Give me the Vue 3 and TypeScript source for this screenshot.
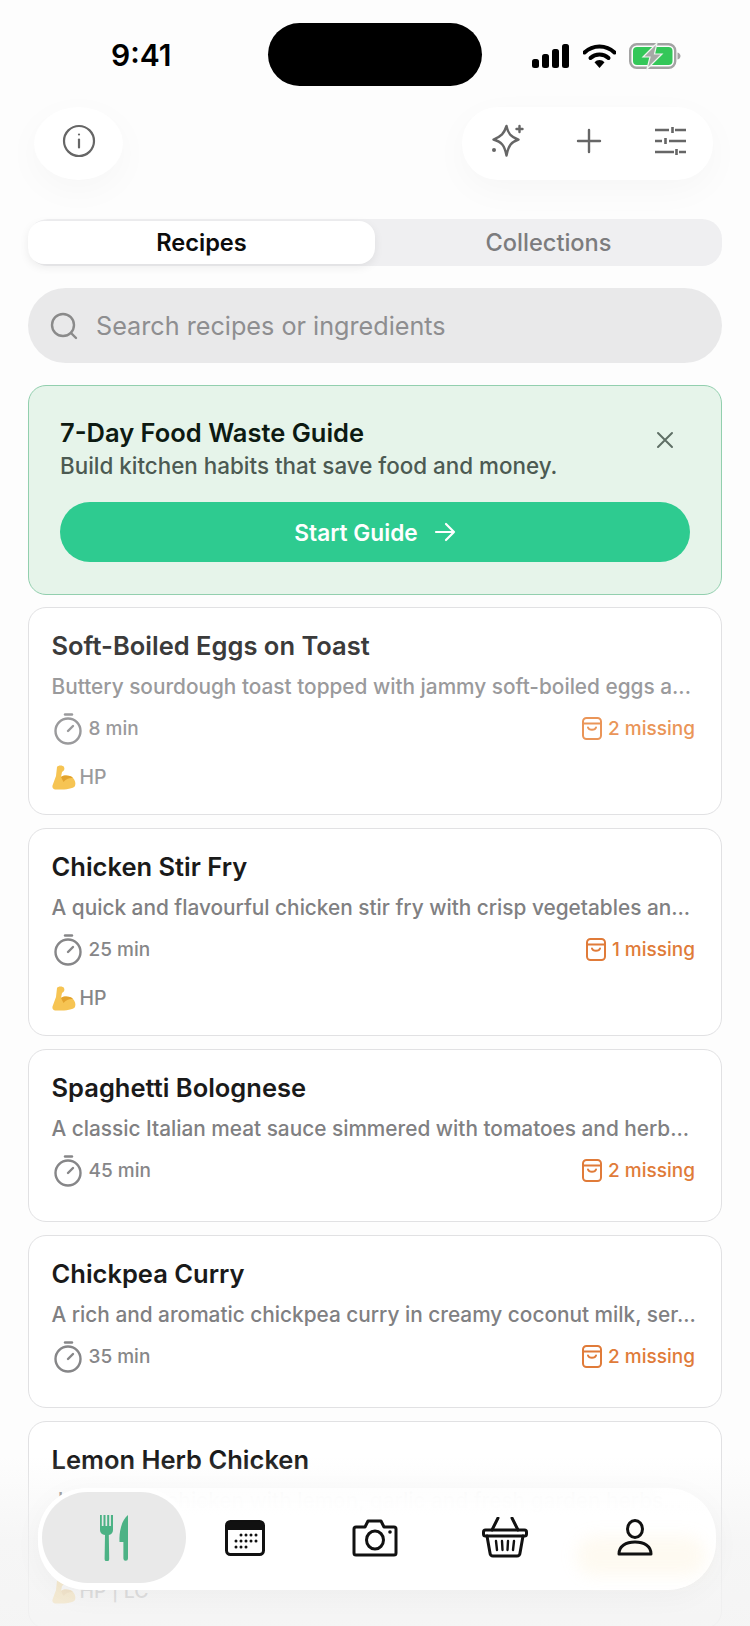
<template>
  <div class="screen">
    <!-- status bar -->
    <div class="status">
      <span class="time">9:41</span>
      <div class="island"></div>
      <div class="status-icons">
        <svg width="38" height="24" viewBox="0 0 38 24"><rect x="0" y="15" width="7" height="9" rx="2.5"/><rect x="10" y="10" width="7" height="14" rx="2.5"/><rect x="20" y="5" width="7" height="19" rx="2.5"/><rect x="30" y="0" width="7" height="24" rx="2.5"/></svg>
        <svg width="33" height="24" viewBox="0 0 33 24"><path d="M1.500 8.500a21.500 21.500 0 0 1 30 0" fill="none" stroke="#000" stroke-width="4" stroke-linecap="round"/><path d="M7.500 14a13 13 0 0 1 18 0" fill="none" stroke="#000" stroke-width="4" stroke-linecap="round"/><path d="M11.500 18.200a7 7 0 0 1 10 0L16.500 24z"/></svg>
        <svg class="batt" width="52" height="26" viewBox="0 0 52 26">
          <rect x="1.200" y="1.200" width="45" height="23.600" rx="6.500" fill="none" stroke="#a3a3a3" stroke-width="2.400"/>
          <rect x="4" y="4" width="39.500" height="18" rx="4" fill="#34c759"/>
          <path d="M48.500 9.500c2 .5 3 2 3 3.500s-1 3-3 3.500z" fill="#a3a3a3"/>
          <path d="M28 0 14 14h7l-3 12 15-15h-7.500z" fill="#a6a9a6" stroke="#eef5ef" stroke-width="1.200"/>
        </svg>
      </div>
    </div>

    <!-- top buttons -->
    <div class="topbar">
      <button class="round-btn">
        <svg width="34" height="34" viewBox="0 0 34 34" fill="none" stroke="#666" stroke-width="2.200"><circle cx="17" cy="17" r="15"/><path d="M17 15.500v8" stroke-linecap="round"/><circle cx="17" cy="10.500" r="1.100" fill="#666" stroke="none"/></svg>
      </button>
      <div class="action-pill">
        <svg width="36" height="36" viewBox="0 0 36 36" fill="none" stroke="#666" stroke-width="2.400" stroke-linejoin="round" stroke-linecap="round">
          <path d="M16.500 3c1.500 7.500 4 10.500 12 13.500-7 2.500-10 5.500-12 16-2-10.500-5-13.500-13-16 8-3 10.500-6 13-13.500z"/>
          <path d="M29.500 3v6M26.500 6h6"/>
          <path d="M4 27h.01" stroke-width="4"/>
        </svg>
        <svg width="32" height="32" viewBox="0 0 32 32" stroke="#666" stroke-width="2.400" stroke-linecap="round"><path d="M16 5v22M5 16h22"/></svg>
        <svg width="34" height="34" viewBox="0 0 34 34" stroke="#666" stroke-width="2.600" fill="none"><path d="M3 6h14M23 6h11M20.500 3v6M3 17h7M17 17h17M13.500 14v6M3 28h19M27 28h7M24.500 25v6"/></svg>
      </div>
    </div>

    <!-- tabs -->
    <div class="tabs">
      <div class="tab active">Recipes</div>
      <div class="tab">Collections</div>
    </div>

    <!-- search -->
    <div class="search">
      <svg width="28" height="28" viewBox="0 0 28 28" fill="none" stroke="#8a8a8a" stroke-width="2.400" stroke-linecap="round"><circle cx="13" cy="13" r="11"/><path d="m21 21 5 5"/></svg>
      <span>Search recipes or ingredients</span>
    </div>

    <!-- guide banner -->
    <div class="banner">
      <div class="banner-head">
        <div>
          <p class="banner-title">7-Day Food Waste Guide</p>
          <p class="banner-sub">Build kitchen habits that save food and money.</p>
        </div>
        <svg class="close" width="18" height="18" viewBox="0 0 18 18" stroke="#5f6f66" stroke-width="2" stroke-linecap="round"><path d="m2 2 14 14M16 2 2 16"/></svg>
      </div>
      <div class="start">
        Start Guide
        <svg width="22" height="20" viewBox="0 0 22 20" fill="none" stroke="#fff" stroke-width="2.200" stroke-linecap="round" stroke-linejoin="round"><path d="M2 10h18M12 2l8 8-8 8"/></svg>
      </div>
    </div>

    <!-- recipe cards -->
    <div v-for="r in recipes" :key="r.title" class="card" :class="{ dim: r.dim }">
      <p class="title">{{ r.title }}</p>
      <p class="desc">{{ r.desc }}</p>
      <div class="meta">
        <span class="time-info">
          <svg width="30" height="32" viewBox="0 0 30 32" fill="none" stroke="currentColor" stroke-width="2.400" stroke-linecap="round"><path d="M12 1.500h7"/><circle cx="15" cy="18" r="12.500"/><path d="m15 18 5-5"/></svg>
          {{ r.time }}
        </span>
        <span class="missing">
          <svg width="20" height="23" viewBox="0 0 20 23" fill="none" stroke="currentColor" stroke-width="2" stroke-linecap="round"><rect x="1" y="1" width="18" height="21" rx="3.500"/><path d="M1 6.500h18M6 10.500c1 3 7 3 8 0"/></svg>
          {{ r.missing }} missing
        </span>
      </div>
      <div v-if="r.tag" class="tag">
        <svg width="24" height="25" viewBox="0 0 24 25"><path d="M5 2c1-2 6-2 7 0 1 2 0 4-2 5L9 12c3-2 9-2 12 1 2 2 3 5 2 8-2 3-12 4-20 3.500-2-.5-3-2-2.500-4L4 11z" fill="#f6c453"/><path d="M9 12c3-2 9-2 12 1-3-.5-7 .5-9.500 4z" fill="#e3a32e"/></svg>
        <span>{{ r.tag }}</span>
      </div>
    </div>

    <!-- bottom glass -->
    <div class="fade"></div>
    <nav class="nav">
      <i class="blob"></i>
      <div class="nav-item current">
        <svg width="30" height="46" viewBox="0 0 30 46" fill="#4cb285">
          <path d="M1 0h1.800v11h1.700V0h2v11h1.700V0h2v11h1.700V0H14v15c0 3-2 4.500-4.200 5l.4 24a2.300 2.300 0 0 1-4.600 0l.4-24C3 19.500 1 18 1 15z"/>
          <path d="M29 0v43.500a2.300 2.300 0 0 1-4.600 0V27h-3.900c-.5-10 2-22 8.500-27z"/>
        </svg>
      </div>
      <div class="nav-item">
        <svg width="40" height="36" viewBox="0 0 40 36">
          <rect x="1.500" y="1.500" width="37" height="33" rx="4" fill="#fff" stroke="#111" stroke-width="3"/>
          <path d="M1.500 5.500a4 4 0 0 1 4-4h29a4 4 0 0 1 4 4V10h-37z" fill="#111"/>
          <g fill="#111"><circle v-for="d in calDots" :key="d[0] + '-' + d[1]" :cx="d[0]" :cy="d[1]" r="1.500"/></g>
        </svg>
      </div>
      <div class="nav-item">
        <svg width="46" height="38" viewBox="0 0 46 38" fill="none" stroke="#111" stroke-width="3" stroke-linejoin="round">
          <path d="M4 8h9l3-6h13l3 6h10a2 2 0 0 1 2 2v24a2 2 0 0 1-2 2H4a2 2 0 0 1-2-2V10a2 2 0 0 1 2-2z"/>
          <ellipse cx="23" cy="21" rx="8.500" ry="9"/>
          <circle cx="38" cy="13" r="1.800" fill="#111" stroke="none"/>
        </svg>
      </div>
      <div class="nav-item">
        <svg width="46" height="41" viewBox="0 0 46 41" fill="none" stroke="#111" stroke-width="3" stroke-linecap="round" stroke-linejoin="round">
          <path d="M16 1 10 13M30 1l6 12"/>
          <rect x="1.500" y="13" width="43" height="6" rx="2"/>
          <path d="m5 19 3 17a3 3 0 0 0 3 3h24a3 3 0 0 0 3-3l3-17"/>
          <path d="m14 24 1 9M20 24l.5 9M26 24l-.5 9M32 24l-1 9" stroke-width="2.400"/>
        </svg>
      </div>
      <div class="nav-item">
        <svg width="36" height="37" viewBox="0 0 36 37" fill="none" stroke="#111" stroke-width="3" stroke-linejoin="round">
          <ellipse cx="18" cy="10" rx="7.500" ry="8.500"/>
          <path d="M2 35c0-8 7-12 16-12s16 4 16 12z"/>
        </svg>
      </div>
    </nav>
  </div>
</template>

<script setup lang="ts">
interface Recipe {
  title: string
  desc: string
  time: string
  missing: number
  tag?: string
  dim?: boolean
}

const recipes: Recipe[] = [
  { title: 'Soft-Boiled Eggs on Toast', desc: 'Buttery sourdough toast topped with jammy soft-boiled eggs a...', time: '8 min', missing: 2, tag: 'HP', dim: true },
  { title: 'Chicken Stir Fry', desc: 'A quick and flavourful chicken stir fry with crisp vegetables an...', time: '25 min', missing: 1, tag: 'HP' },
  { title: 'Spaghetti Bolognese', desc: 'A classic Italian meat sauce simmered with tomatoes and herb...', time: '45 min', missing: 2 },
  { title: 'Chickpea Curry', desc: 'A rich and aromatic chickpea curry in creamy coconut milk, ser...', time: '35 min', missing: 2 },
  { title: 'Lemon Herb Chicken', desc: 'Juicy roast chicken with lemon, garlic and fresh garden herbs...', time: '40 min', missing: 2, tag: 'HP | LC' }
]

// calendar dots, row by row
const calDots: number[][] = []
;[[16, 21, 26, 31], [11, 16, 21, 26, 31], [11, 16, 21]].forEach((xs, i) => {
  xs.forEach(x => calDots.push([x, 15 + i * 6]))
})
</script>

<style>
html, body { margin: 0; background: #fdfdfd; }
</style>

<style scoped>
.screen { position: relative; width: 750px; height: 1626px; overflow: hidden; background: #fdfdfd; font-family: Inter, "Liberation Sans", sans-serif; }
p { margin: 0; }

.status { height: 107px; position: relative; }
.time { position: absolute; left: 111px; top: 37px; font-size: 30px; font-weight: 600; line-height: 36px; color: #000; }
.island { position: absolute; left: 268px; top: 23px; width: 214px; height: 63px; border-radius: 32px; background: #000; }
.status-icons { position: absolute; left: 532px; top: 43px; display: flex; align-items: center; gap: 13px; }
.status-icons svg { display: block; }
.batt { overflow: visible; }

.topbar { display: flex; justify-content: space-between; padding: 0 37px 0 34px; }
.round-btn { width: 89px; height: 73px; border: 0; padding: 0 0 6px; border-radius: 50%; background: #fff; box-shadow: 0 10px 36px rgba(0,0,0,.03); display: flex; align-items: center; justify-content: center; }
.action-pill { width: 251px; height: 73px; box-sizing: border-box; padding: 0 27px 6px 28px; border-radius: 36px; background: #fff; box-shadow: 0 10px 36px rgba(0,0,0,.03); display: flex; align-items: center; justify-content: space-between; }

.tabs { margin: 39px 28px 0; height: 47px; border-radius: 20px; background: #efeff1; display: flex; align-items: stretch; }
.tab { flex: 1; display: flex; align-items: center; justify-content: center; font-size: 23.600px; font-weight: 500; color: #7c7c7e; margin: 2px 0 2px; }
.tab.active { background: #fff; color: #0c0c0c; font-weight: 600; border-radius: 16px; box-shadow: 0 3px 10px rgba(0,0,0,.07); }

.search { margin: 22px 28px 0; height: 75px; box-sizing: border-box; padding: 0 22px; border-radius: 38px; background: #e9e9ea; display: flex; align-items: center; gap: 18px; font-size: 25.200px; color: #8e8e90; }

.banner { margin: 22px 28px 0; height: 210px; box-sizing: border-box; padding: 32px 31px 0; border: 1.500px solid #92cfae; border-radius: 18px; background: #e6f4ea; }
.banner-head { display: flex; justify-content: space-between; align-items: flex-start; padding-right: 16px; }
.banner-title { font-size: 25.500px; font-weight: 600; line-height: 30px; color: #0d1a12; }
.banner-sub { margin-top: 2px; font-size: 22.400px; font-weight: 500; line-height: 32px; color: #4c5a52; }
.close { display: block; margin-top: 13px; }
.start { margin-top: 20px; height: 60px; border-radius: 30px; background: #2ecb90; color: #fff; font-size: 22.700px; font-weight: 600; display: flex; align-items: center; justify-content: center; gap: 16px; }

.card { margin: 12px 28px 0; box-sizing: border-box; padding: 21px 26px 25px 22.500px; border: 1.500px solid #e1e1e3; border-radius: 18px; background: #fff; }
.card + .card { margin-top: 13px; }
.title { font-size: 25.500px; font-weight: 600; line-height: 34px; color: #1a1a1a; }
.desc { margin-top: 9px; font-size: 20.800px; font-weight: 500; line-height: 30px; color: #808082; white-space: nowrap; }
.meta { margin: 10px 0; height: 32px; display: flex; justify-content: space-between; align-items: center; color: #868688; font-size: 19px; font-weight: 500; }
.time-info { display: flex; align-items: center; gap: 6px; }
.time-info svg { display: block; margin: 2px 0 0 1px; }
.missing { display: flex; align-items: center; gap: 6px; color: #e07b39; }
.tag { margin: 19px 0 -2px; height: 28px; display: flex; align-items: center; gap: 4px; color: #868688; font-size: 19.500px; font-weight: 500; }
.dim .title { color: #3b3b3b; }
.dim .desc { color: #9a9a9c; }
.dim .meta, .dim .tag { color: #9a9a9c; }
.dim .missing { color: #ea9558; }

.fade { position: absolute; left: 0; right: 0; bottom: 0; height: 170px; background: linear-gradient(180deg, rgba(245,245,245,0) 0%, rgba(243,243,243,.7) 50%, rgba(243,243,243,.85) 100%); }
.nav { position: absolute; left: 38px; top: 1488px; width: 678px; height: 102px; box-sizing: border-box; padding: 4px 0 7px 4px; border-radius: 48px; background: linear-gradient(180deg, rgba(255,255,255,.9) 0%, rgba(255,255,255,.97) 30%); backdrop-filter: blur(18px); box-shadow: 0 6px 30px rgba(0,0,0,.035); display: flex; }
.nav-item { position: relative; width: 130px; display: flex; align-items: center; justify-content: center; }
.nav-item svg { display: block; }
.nav-item.current { width: 144px; margin-right: -6px; border-radius: 46px; background: #e9e9e9; box-shadow: 0 0 0 4px rgba(255,255,255,.9); }
.blob { position: absolute; right: 10px; bottom: 14px; width: 130px; height: 40px; border-radius: 20px; background: rgba(250,214,150,.13); filter: blur(8px); }
</style>
